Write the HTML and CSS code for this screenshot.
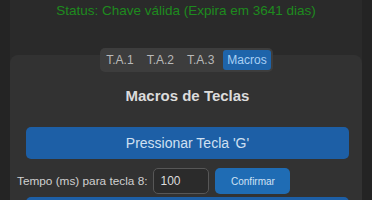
FILE: index.html
```html
<!DOCTYPE html>
<html>
<head>
<meta charset="utf-8">
<link rel="stylesheet" href="styles.css">
</head>
<body>
<div class="wrap">
  <div class="status">Status: Chave válida (Expira em 3641 dias)</div>
  <div class="tabbar">
    <div class="tabs">
      <span class="tab">T.A.1</span>
      <span class="tab">T.A.2</span>
      <span class="tab">T.A.3</span>
      <span class="tab active">Macros</span>
    </div>
  </div>
  <div class="card">
    <h2 class="title">Macros de Teclas</h2>
    <button class="big-btn">Pressionar Tecla 'G'</button>
    <div class="row">
      <label class="lbl">Tempo (ms) para tecla 8:</label>
      <input class="num" type="text" value="100">
      <button class="small-btn">Confirmar</button>
    </div>
    <button class="big-btn next">Pressionar Tecla 'H'</button>
  </div>
</div>
</body>
</html>
```
FILE: styles.css
```css
html, body {
  margin: 0;
  padding: 0;
  background: #242424;
  font-family: "Liberation Sans", Arial, sans-serif;
  overflow: hidden;
  height: 200px;
}
.wrap {
  margin: 0 10px;
  background: #2a2a2a;
  min-height: 200px;
}
.status {
  text-align: center;
  color: #1e8a1e;
  font-size: 13.5px;
  line-height: 16px;
  padding-top: 3px;
}
.tabbar {
  display: flex;
  justify-content: center;
  margin-top: 29px;
  position: relative;
  z-index: 2;
  padding-left: 1px;
}
.tabs {
  display: flex;
  gap: 5px;
  padding: 2px;
  background: #3d3d3d;
  border-radius: 5px;
}
.tab {
  font-size: 12px;
  line-height: 20px;
  padding: 0 4px;
  color: #b8b8b8;
  border-radius: 3px;
}
.tab.active {
  background: #1e64aa;
  color: #a9d0f5;
}
.card {
  margin-top: -17px;
  background: #323232;
  border-radius: 8px;
  padding: 32px 13px 0 16px;
  min-height: 200px;
}
.title {
  margin: 0;
  text-align: center;
  font-size: 15px;
  line-height: 18px;
  font-weight: bold;
  color: #dcdcdc;
}
.big-btn {
  display: block;
  width: 100%;
  margin-top: 22px;
  height: 32px;
  border: none;
  border-radius: 5px;
  background: #1d5fa6;
  color: #cfe0f2;
  font-family: "Liberation Sans", Arial, sans-serif;
  font-size: 14px;
  padding: 0;
}
.big-btn.next {
  margin-top: 3px;
}
.row {
  display: flex;
  align-items: center;
  gap: 6px;
  margin-top: 9px;
  margin-left: -9px;
  height: 26px;
}
.lbl {
  font-size: 11.8px;
  color: #d0d0d0;
}
.num {
  box-sizing: border-box;
  width: 56px;
  height: 26px;
  background: #2b2b2b;
  border: 1px solid #575757;
  border-radius: 5px;
  color: #dcdcdc;
  font-family: "Liberation Sans", Arial, sans-serif;
  font-size: 12px;
  padding: 0 6px;
  outline: none;
}
.small-btn {
  width: 75px;
  height: 26px;
  border: none;
  border-radius: 5px;
  background: #1f6cb4;
  color: #cfe2f5;
  font-family: "Liberation Sans", Arial, sans-serif;
  font-size: 10px;
  padding: 0;
}
```
